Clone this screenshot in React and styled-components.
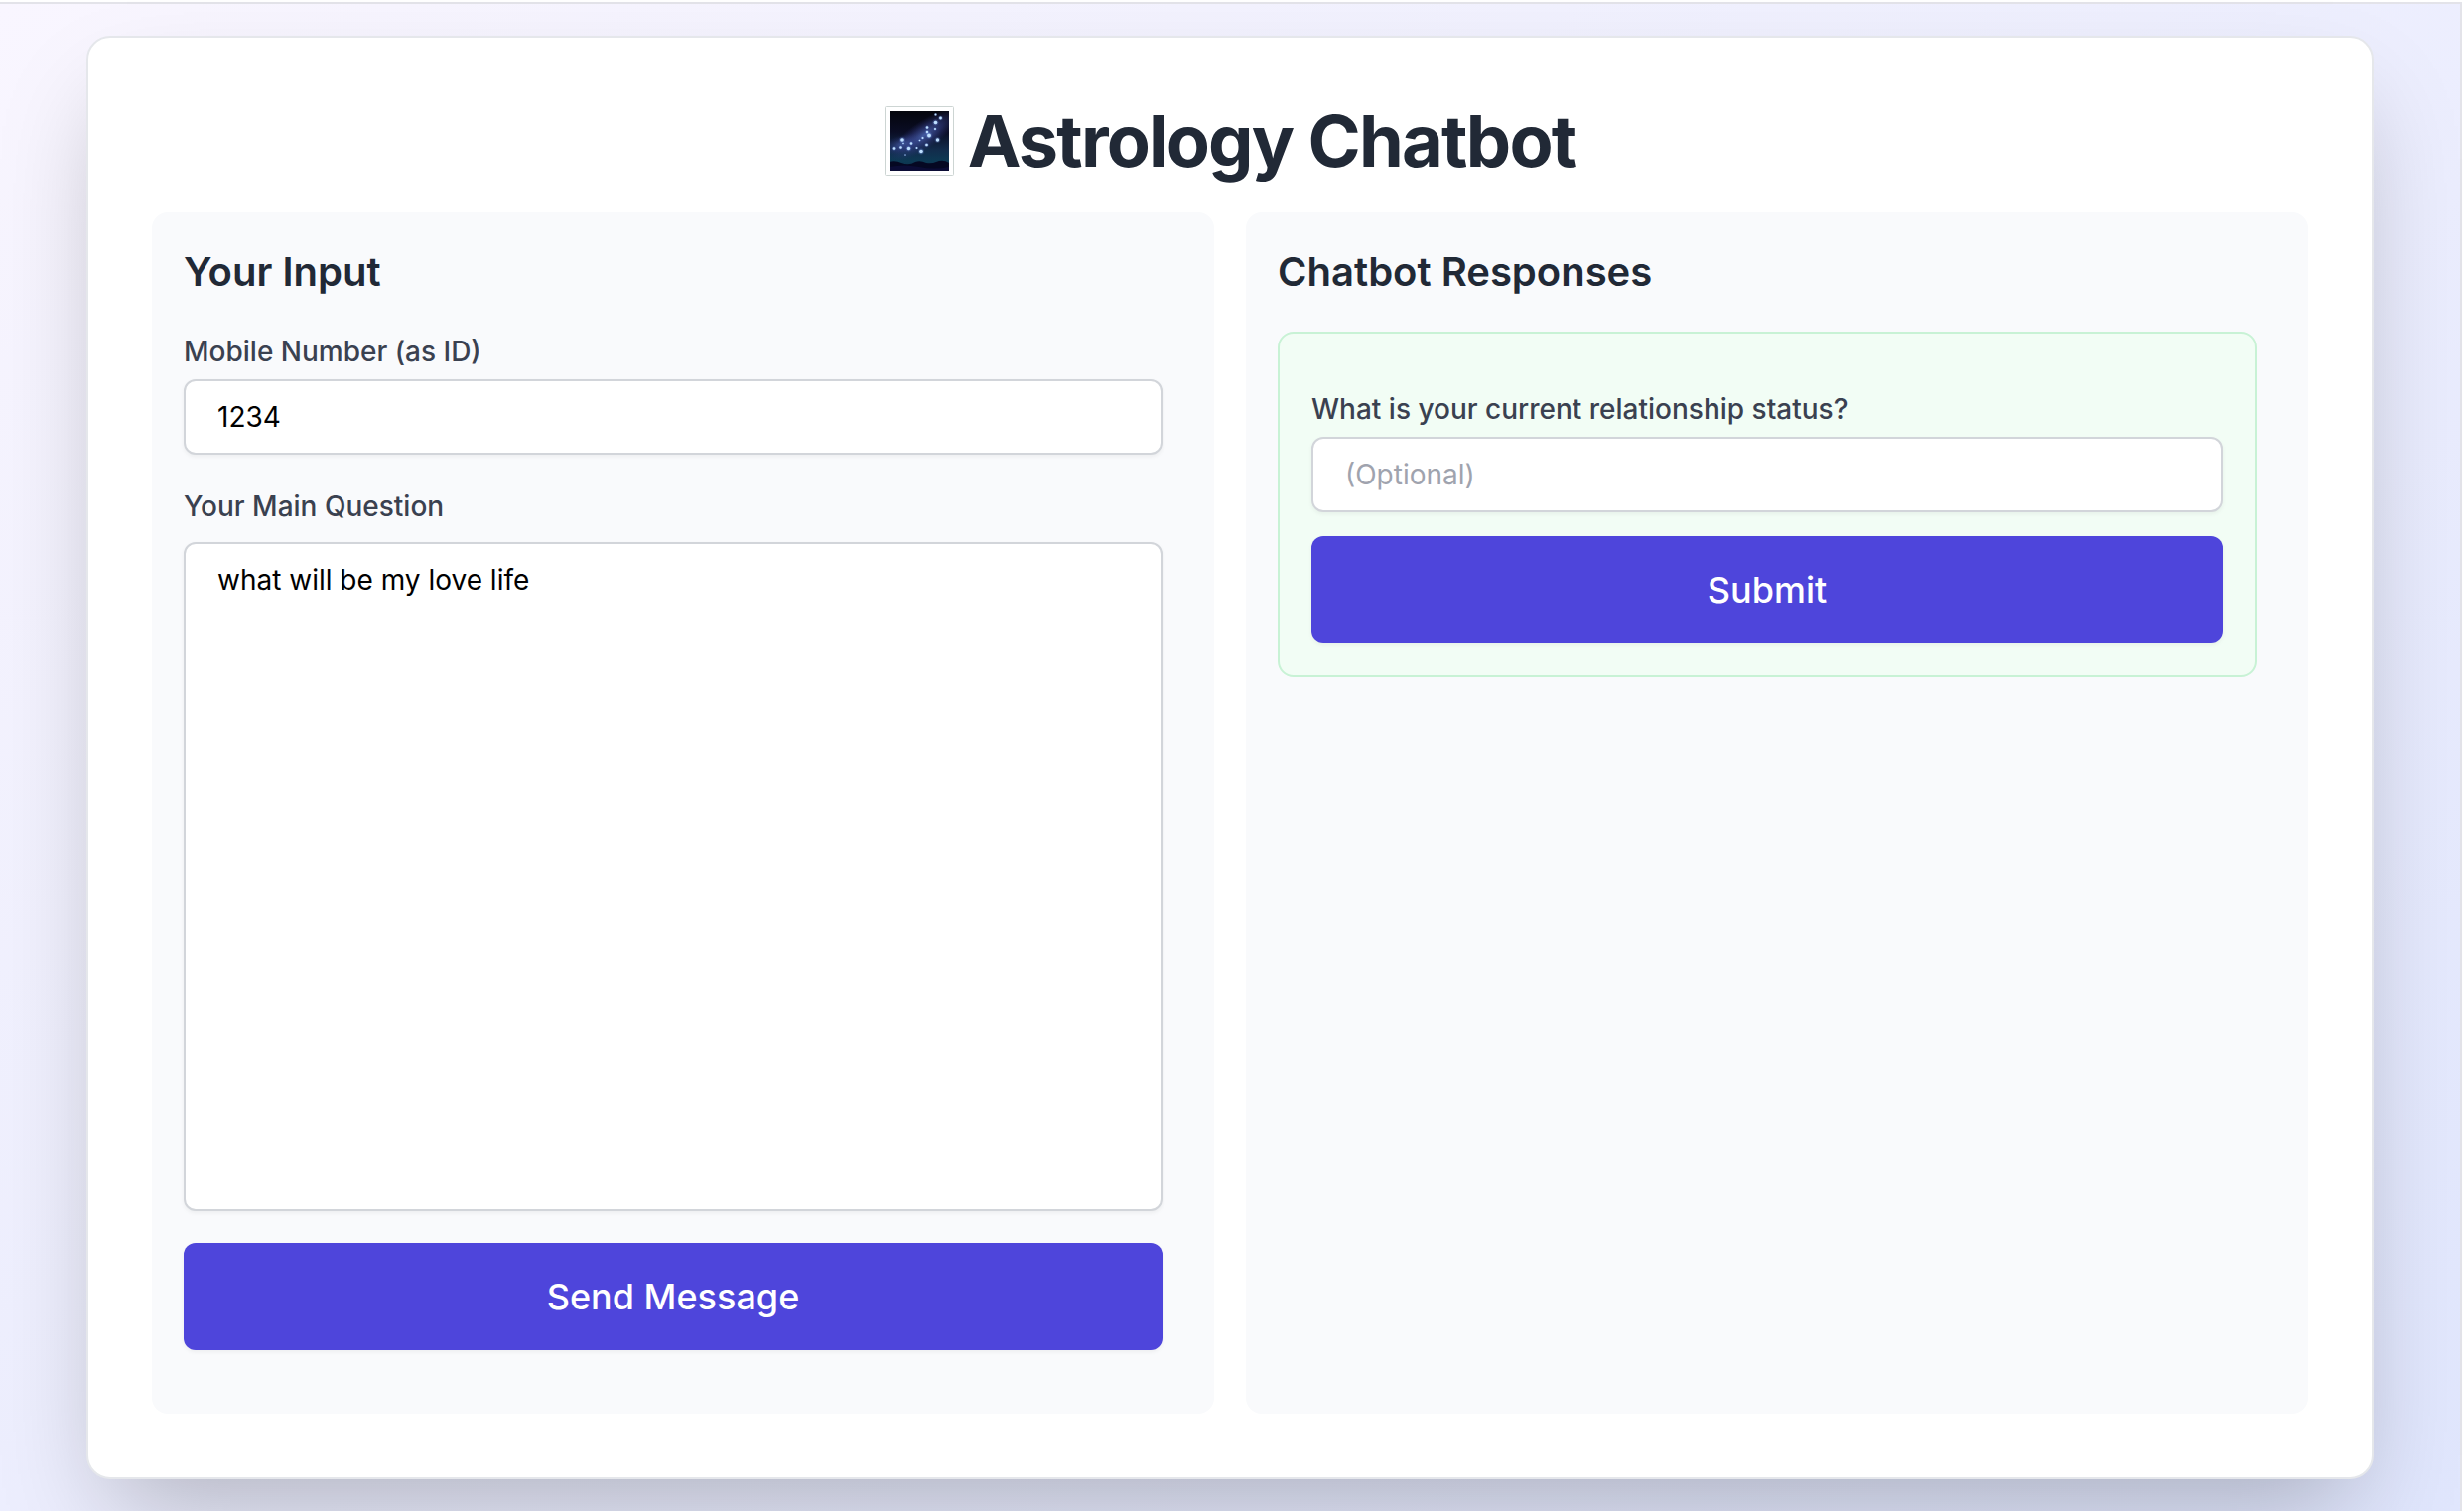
import React, { useState } from "react";
import styled, { createGlobalStyle } from "styled-components";

const GlobalStyle = createGlobalStyle`
  *, *::before, *::after { box-sizing: border-box; }
  body { margin: 0; background: #fff; }
  h1, h2, form { margin: 0; }
  body, button, input, textarea { font-family: Inter, "Liberation Sans", sans-serif; }
`;

const Frame = styled.div`
  display: flex;
  min-height: 100vh;
  padding: 2px 2px 0 0;
`;

const Page = styled.div`
  flex: 1;
  display: flex;
  justify-content: center;
  padding: 32px;
  border: solid #e3e3e9;
  border-width: 2px 2px 0 0;
  background: linear-gradient(to bottom right, #f9f6ff, #e0e6fd);
`;

const Card = styled.main`
  display: flex;
  flex-direction: column;
  gap: 32px;
  width: 100%;
  max-width: 2304px;
  padding: 64px;
  border: 2px solid #e5e7eb;
  border-radius: 24px;
  background: #fff;
  box-shadow: 0 50px 100px -24px rgba(0, 0, 0, 0.25);
`;

const Title = styled.h1`
  display: flex;
  align-items: center;
  justify-content: center;
  gap: 14px;
  font-size: 72px;
  line-height: 80px;
  font-weight: 700;
  letter-spacing: -0.025em;
  color: #212936;
`;

const Columns = styled.div`
  flex: 1;
  display: grid;
  grid-template-columns: 1fr 1fr;
  gap: 32px;
`;

const Panel = styled.section`
  display: flex;
  flex-direction: column;
  gap: 32px;
  padding: 32px 52px 32px 32px;
  border-radius: 16px;
  background: #f9fafc;
`;

const PanelTitle = styled.h2`
  font-size: 40px;
  line-height: 56px;
  font-weight: 600;
  color: #212936;
`;

const MessageForm = styled.form`
  flex: 1;
  display: flex;
  flex-direction: column;
  gap: 32px;
  padding-bottom: 32px;
`;

const FollowUpForm = styled.form`
  display: flex;
  flex-direction: column;
  gap: 24px;
  padding: 56px 32px 32px;
  border: 2px solid #c8f2d5;
  border-radius: 16px;
  background: #f2fdf5;
`;

const Field = styled.div`
  flex: ${(p) => (p.$grow ? "1" : "none")};
  display: flex;
  flex-direction: column;
  gap: ${(p) => (p.$grow ? "16px" : "8px")};
`;

const Label = styled.label`
  font-size: 28px;
  line-height: 40px;
  font-weight: 500;
  color: #3a4150;
`;

const Input = styled.input`
  width: 100%;
  margin: 0;
  padding: 16px 32px;
  border: 2px solid #d2d5da;
  border-radius: 12px;
  outline: none;
  background: #fff;
  color: #000;
  font-size: 28px;
  line-height: 40px;
  height: ${(p) => (p.as === "textarea" ? "auto" : "76px")};
  flex: ${(p) => (p.as === "textarea" ? "1" : "none")};
  resize: none;
  box-shadow: 0 2px 4px rgba(0, 0, 0, 0.05);

  &::placeholder {
    color: #9fa3ae;
    opacity: 1;
  }
`;

const Button = styled.button`
  width: 100%;
  padding: 24px 32px;
  border: 2px solid transparent;
  border-radius: 12px;
  background: #4e45db;
  color: #fff;
  font-size: 36px;
  line-height: 56px;
  font-weight: 500;
  cursor: pointer;
  box-shadow: 0 2px 4px rgba(0, 0, 0, 0.05);
`;

const STARS = [
  [51.5, 8.5, 1], [56.5, 12, 1.4], [51.5, 16.5, 1.8], [43, 21.5, 1.2], [51, 23, 1],
  [43, 26, 1.2], [45, 29.5, 1.9], [53.5, 34, 1.7], [38.5, 32, 1], [35.5, 34.5, 0.8],
  [42.5, 39, 1.3], [27, 37.5, 1.2], [18, 34, 1.8], [32.5, 42, 0.9], [37, 45.5, 1.8],
  [24.5, 42.5, 1.7], [16.5, 41.5, 1.2], [10, 42.5, 1.3], [19, 37.5, 0.7], [21, 49, 0.6],
];

function MilkyWayIcon() {
  return (
    <svg width="70" height="70" viewBox="0 0 70 70" aria-hidden="true">
      <defs>
        <linearGradient id="night" x1="0" y1="0" x2="0" y2="1">
          <stop offset="0" stopColor="#04050c" />
          <stop offset="0.35" stopColor="#0a0d24" />
          <stop offset="0.65" stopColor="#122c4c" />
          <stop offset="0.84" stopColor="#0d3a54" />
          <stop offset="1" stopColor="#0a2a45" />
        </linearGradient>
        <radialGradient id="haze">
          <stop offset="0" stopColor="#5572c8" stopOpacity="0.75" />
          <stop offset="0.5" stopColor="#3a4795" stopOpacity="0.5" />
          <stop offset="1" stopColor="#2b2f78" stopOpacity="0" />
        </radialGradient>
        <radialGradient id="glow">
          <stop offset="0" stopColor="#9cc4ff" stopOpacity="0.7" />
          <stop offset="1" stopColor="#6a8ff0" stopOpacity="0" />
        </radialGradient>
        <clipPath id="photo">
          <rect x="5" y="5" width="60" height="60" />
        </clipPath>
      </defs>
      <rect x="0.5" y="0.5" width="69" height="69" rx="1" fill="#fff" stroke="#cdd5d3" />
      <g clipPath="url(#photo)">
        <rect x="5" y="5" width="60" height="60" fill="url(#night)" />
        <ellipse cx="40" cy="29" rx="42" ry="14" transform="rotate(-34 40 29)" fill="url(#haze)" />
        <ellipse cx="18" cy="38" rx="22" ry="9" transform="rotate(-15 18 38)" fill="url(#haze)" opacity="0.7" />
        {STARS.map(([x, y, r]) => (
          <g key={`${x}-${y}`}>
            <circle cx={x} cy={y} r={r * 2} fill="url(#glow)" />
            <circle cx={x} cy={y} r={r} fill="#bfe0ff" />
          </g>
        ))}
        <path d="M5 56 Q11 54 17 57 Q25 60 31 56 Q36 54 42 57 Q48 58 52 56 Q59 53 65 57 V65 H5Z" fill="#050822" />
        <path d="M5 61 Q20 58 35 61 T65 61 V65 H5Z" fill="#0b0c35" />
      </g>
    </svg>
  );
}

export default function App() {
  const [mobile, setMobile] = useState("1234");
  const [question, setQuestion] = useState("what will be my love life");
  const [answer, setAnswer] = useState("");
  const hold = (event) => event.preventDefault();

  return (
    <Frame>
      <GlobalStyle />
      <Page>
        <Card>
          <Title>
            <MilkyWayIcon />
            Astrology Chatbot
          </Title>
          <Columns>
            <Panel>
              <PanelTitle>Your Input</PanelTitle>
              <MessageForm onSubmit={hold}>
                <Field>
                  <Label htmlFor="mobile">Mobile Number (as ID)</Label>
                  <Input id="mobile" type="text" value={mobile} onChange={(e) => setMobile(e.target.value)} />
                </Field>
                <Field $grow>
                  <Label htmlFor="question">Your Main Question</Label>
                  <Input
                    as="textarea"
                    id="question"
                    rows={4}
                    value={question}
                    onChange={(e) => setQuestion(e.target.value)}
                  />
                </Field>
                <Button type="submit">Send Message</Button>
              </MessageForm>
            </Panel>
            <Panel>
              <PanelTitle>Chatbot Responses</PanelTitle>
              <FollowUpForm onSubmit={hold}>
                <Field>
                  <Label htmlFor="status">What is your current relationship status?</Label>
                  <Input
                    id="status"
                    type="text"
                    placeholder="(Optional)"
                    value={answer}
                    onChange={(e) => setAnswer(e.target.value)}
                  />
                </Field>
                <Button type="submit">Submit</Button>
              </FollowUpForm>
            </Panel>
          </Columns>
        </Card>
      </Page>
    </Frame>
  );
}
